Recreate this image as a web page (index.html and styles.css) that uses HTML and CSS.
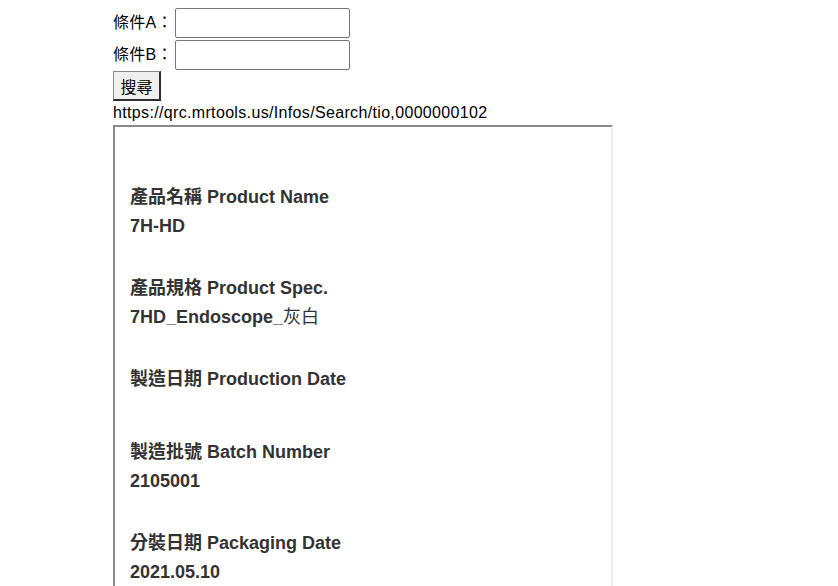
FILE: index.html
```html
<!DOCTYPE html>
<html lang="zh-Hant">
<head>
<meta charset="utf-8">
<title>查詢</title>
<link rel="stylesheet" href="styles.css">
</head>
<body>
<div class="page">
  <form class="search">
    <div class="row"><label class="lbl">條件A：</label><input class="field" type="text"></div>
    <div class="row"><label class="lbl">條件B：</label><input class="field" type="text"></div>
    <div class="row btn-row"><button class="btn" type="button">搜尋</button></div>
  </form>
  <div class="url">https://qrc.mrtools.us/Infos/Search/tio,0000000102</div>
  <div class="frame">
    <div class="item">
      <div class="label">產品名稱 Product Name</div>
      <div class="value">7H-HD</div>
    </div>
    <div class="item">
      <div class="label">產品規格 Product Spec.</div>
      <div class="value">7HD_Endoscope_<span class="cjk">灰白</span></div>
    </div>
    <div class="item">
      <div class="label">製造日期 Production Date</div>
      <div class="value empty"></div>
    </div>
    <div class="item">
      <div class="label">製造批號 Batch Number</div>
      <div class="value">2105001</div>
    </div>
    <div class="item">
      <div class="label">分裝日期 Packaging Date</div>
      <div class="value">2021.05.10</div>
    </div>
  </div>
</div>
</body>
</html>
```

FILE: styles.css
```css
html, body {
  margin: 0;
  padding: 0;
  background: #ffffff;
}
body {
  font-family: "Liberation Sans", "Noto Sans CJK TC", sans-serif;
  font-size: 16px;
  color: #000;
  overflow: hidden;
}
.page {
  padding: 8px 0 0 113px;
}
.search {
  display: flex;
  flex-direction: column;
  gap: 2px;
  margin: 0;
}
.row {
  display: flex;
  align-items: center;
  height: 30px;
}
.lbl {
  font-size: 16px;
  line-height: 30px;
  margin-right: 2px;
  letter-spacing: 0.3px;
}
.field {
  width: 175px;
  height: 30px;
  box-sizing: border-box;
  border: 1px solid #767676;
  border-radius: 2px;
  padding: 2px 4px;
  margin: 0;
  font-size: 16px;
  background: #fff;
}
.btn-row {
  height: 30px;
  margin-top: -1px;
}
.btn {
  width: 48px;
  height: 30px;
  box-sizing: border-box;
  margin: 0;
  padding: 0;
  background: #efefef;
  border-top: 1px solid #8a8a8a;
  border-left: 1px solid #8a8a8a;
  border-right: 2px solid #2e2e2e;
  border-bottom: 2px solid #2e2e2e;
  border-radius: 0;
  font-family: "Liberation Sans", "Noto Sans CJK TC", sans-serif;
  font-size: 16px;
  color: #000;
}
.url {
  font-size: 16px;
  line-height: 20px;
  margin-top: 2px;
  letter-spacing: 0.34px;
}
.frame {
  margin-top: 2px;
  width: 500px;
  height: 600px;
  box-sizing: border-box;
  border: 2px solid;
  border-color: #8a8a8a #ececec #ececec #8a8a8a;
  padding: 56px 15px 0 15px;
  color: #333;
  font-size: 18px;
}
.item {
  margin-bottom: 33px;
}
.label {
  font-weight: bold;
  line-height: 29px;
  height: 29px;
}
.value {
  font-weight: bold;
  line-height: 29px;
  height: 29px;
}
.value .cjk {
  font-weight: normal;
}
.value.empty {
  height: 11px;
}
```
